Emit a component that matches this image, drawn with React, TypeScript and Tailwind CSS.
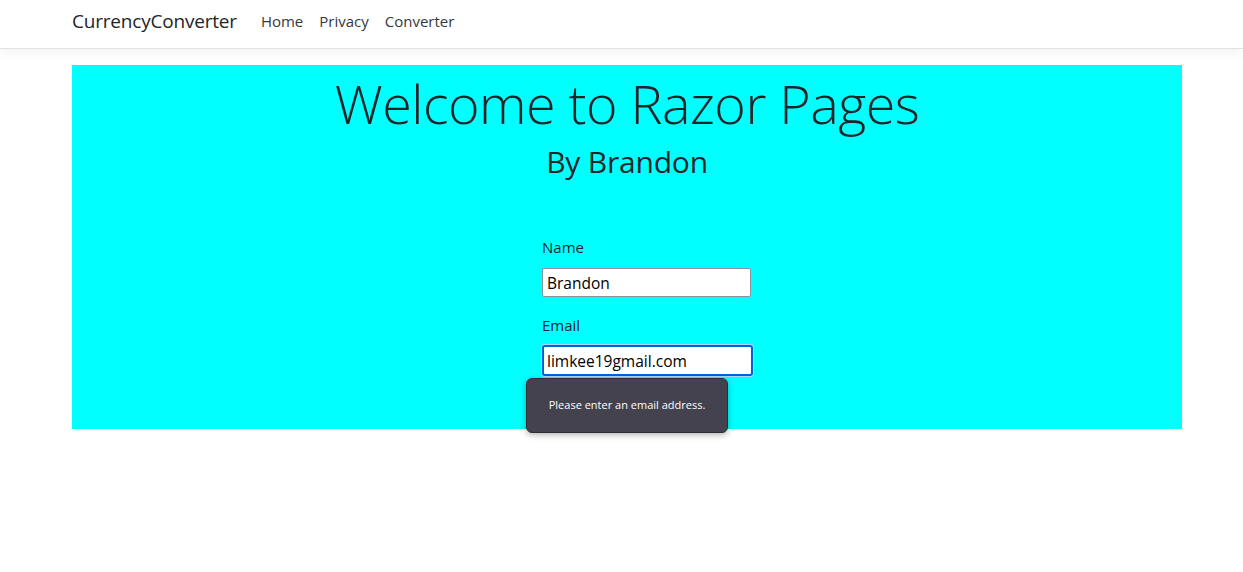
import React from 'react';

const font = "font-['Segoe_UI','Open_Sans','Noto_Sans',sans-serif]";

const App = () => {
  return (
    <div className={`min-h-[572px] bg-white text-[#212529] ${font}`}>
      {/* Navbar */}
      <nav className="h-[49px] border-b border-[#dee2e6] bg-white shadow-[0_4px_12px_rgba(0,0,0,0.05)]">
        <div className="ml-[72px] flex h-[43px] w-[1110px] items-center">
          <a className="mr-[16px] text-[19px] tracking-[-0.2px] text-[#212529]" href="#">
            CurrencyConverter
          </a>
          <a className="px-[8px] text-[15px] text-[#343a40]" href="#">
            Home
          </a>
          <a className="px-[8px] text-[15px] text-[#343a40]" href="#">
            Privacy
          </a>
          <a className="px-[8px] text-[15px] text-[#343a40]" href="#">
            Converter
          </a>
        </div>
      </nav>

      {/* Main */}
      <div className="ml-[72px] mt-[16px] h-[364px] w-[1110px] bg-[#00ffff] text-center">
        <h1 className="pt-[4px] text-[53.8px] font-light leading-[68px] tracking-[-0.5px] text-[#212529]">
          Welcome to Razor Pages
        </h1>
        <h2 className="mt-[5px] text-[30px] leading-[40px] tracking-[-0.2px] text-[#212529]">By Brandon</h2>

        <div className="ml-[470px] mt-[53px] w-[170px] text-left">
          <label className="block text-[15px] leading-[24px] text-[#212529]">Name</label>
          <input
            className="mt-[9px] block h-[29px] w-[209px] rounded-[2px] border border-[#8f8f9d] bg-white px-[4px] text-[15.5px] text-black outline-none"
            defaultValue="Brandon"
          />
          <label className="mt-[16px] block text-[15px] leading-[24px] text-[#212529]">Email</label>
          <div className="relative mt-[8px] w-[211px]">
            <input
              className="block h-[31px] w-[211px] rounded-[3px] border-2 border-[#0060df] bg-white px-[3px] text-[15.5px] text-black outline-none shadow-[0_0_0_1px_#a8d8ff]"
              defaultValue="limkee19gmail.com"
            />
            <div className="absolute left-[-16px] top-[33px] flex h-[55px] w-[202px] items-center justify-center rounded-[6px] border border-[#2e2d36] bg-[#44424e] text-[11px] text-white shadow-[0_2px_6px_rgba(0,0,0,0.3)]">
              Please enter an email address.
            </div>
          </div>
        </div>
      </div>
    </div>
  );
};

export default App;
